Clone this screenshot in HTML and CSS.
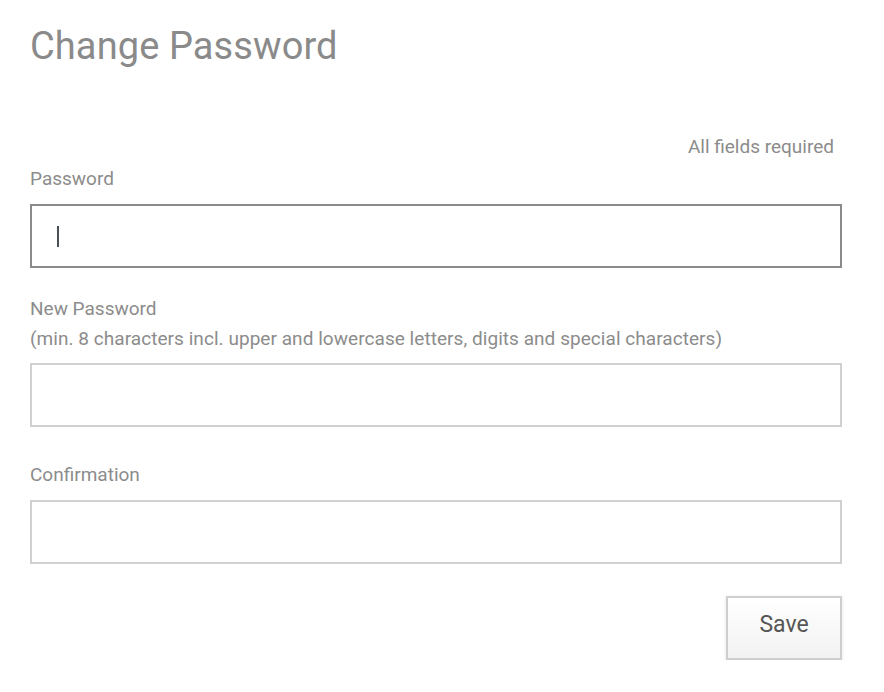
FILE: index.html
```html
<!DOCTYPE html>
<html lang="en">
<head>
<meta charset="utf-8">
<title>Change Password</title>
<link rel="stylesheet" href="styles.css">
</head>
<body>
<main class="page">
  <h1 class="title">Change Password</h1>
  <form class="form">
    <p class="required">All fields required</p>
    <div class="field field--first">
      <label class="label" for="pw">Password</label>
      <div class="input-wrap">
        <input id="pw" class="input input--focus" type="password">
        <span class="caret"></span>
      </div>
    </div>
    <div class="field field--new">
      <label class="label label--tight" for="npw">New Password<br><span class="hint">(min. 8 characters incl. upper and lowercase letters, digits and special characters)</span></label>
      <div class="input-wrap">
        <input id="npw" class="input" type="password">
      </div>
    </div>
    <div class="field field--confirm">
      <label class="label" for="cpw">Confirmation</label>
      <div class="input-wrap">
        <input id="cpw" class="input" type="password">
      </div>
    </div>
    <div class="actions">
      <button type="button" class="btn">Save</button>
    </div>
  </form>
</main>
</body>
</html>
```
FILE: styles.css
```css
* { box-sizing: border-box; }
html, body { margin: 0; padding: 0; background: #fff; }
body {
  font-family: Roboto, "Liberation Sans", Arial, sans-serif;
  color: #888;
}
.page {
  padding: 23px 42px 0 30px;
}
.title {
  margin: 0;
  font-size: 38px;
  font-weight: 400;
  line-height: 46px;
  letter-spacing: 0.1px;
  color: #8a8a8a;
}
.form {
  margin-top: 66px;
  display: flex;
  flex-direction: column;
}
.required {
  margin: 0;
  text-align: right;
  padding-right: 8px;
  font-size: 19px;
  line-height: 24px;
  color: #8c8c8c;
}
.field {
  display: flex;
  flex-direction: column;
}
.field--first { margin-top: 5px; }
.field--new { margin-top: 26px; }
.field--confirm { margin-top: 33px; }
.label {
  font-size: 19px;
  line-height: 30px;
  color: #8c8c8c;
  margin-bottom: 10px;
}
.label--tight { margin-bottom: 9px; }
.hint { letter-spacing: 0.05px; }
.input-wrap { position: relative; }
.input {
  display: block;
  width: 100%;
  height: 64px;
  border: 2px solid #d0d0d0;
  border-radius: 0;
  background: #fff;
  outline: none;
  padding: 0 26px;
  font: inherit;
}
.input--focus { border-color: #8a8a8a; }
.caret {
  position: absolute;
  left: 27px;
  top: 22px;
  width: 2px;
  height: 21px;
  background: #4a4f55;
}
.actions {
  display: flex;
  justify-content: flex-end;
  margin-top: 32px;
}
.btn {
  width: 116px;
  height: 64px;
  padding: 0 0 8px;
  border: 2px solid #cfcfcf;
  background: linear-gradient(#ffffff, #f2f2f2);
  box-shadow: 0 1px 3px rgba(0,0,0,0.12);
  font-family: inherit;
  font-size: 23px;
  color: #555;
  cursor: pointer;
}
```
